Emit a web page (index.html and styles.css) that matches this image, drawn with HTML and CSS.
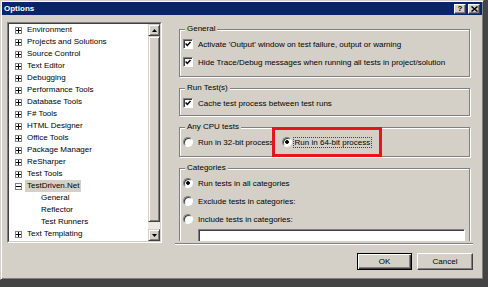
FILE: index.html
```html
<!DOCTYPE html>
<html lang="en">
<head>
    <meta charset="UTF-8">
    <title>Options</title>
    <link rel="stylesheet" href="styles.css">
</head>
<body>

<div class="window">
    <div class="titlebar">
        <span class="title">Options</span>
        <div class="caption-buttons">
            <span class="cap-btn">?</span>
            <span class="cap-btn">
                <svg width="7" height="6" viewBox="0 0 7 6"><path d="M0.5 0.5 L6.5 5.5 M6.5 0.5 L0.5 5.5" stroke="#000" stroke-width="1.5"/></svg>
            </span>
        </div>
    </div>

    <div class="client">
        <div class="main">
            <div class="tree">
                <div class="tree-inner">
                    <ul class="tree-list">
                        <li class="node"><span class="expander"></span><span class="label">Environment</span></li>
                        <li class="node"><span class="expander"></span><span class="label">Projects and Solutions</span></li>
                        <li class="node"><span class="expander"></span><span class="label">Source Control</span></li>
                        <li class="node"><span class="expander"></span><span class="label">Text Editor</span></li>
                        <li class="node"><span class="expander"></span><span class="label">Debugging</span></li>
                        <li class="node"><span class="expander"></span><span class="label">Performance Tools</span></li>
                        <li class="node"><span class="expander"></span><span class="label">Database Tools</span></li>
                        <li class="node"><span class="expander"></span><span class="label">F# Tools</span></li>
                        <li class="node"><span class="expander"></span><span class="label">HTML Designer</span></li>
                        <li class="node"><span class="expander"></span><span class="label">Office Tools</span></li>
                        <li class="node"><span class="expander"></span><span class="label">Package Manager</span></li>
                        <li class="node"><span class="expander"></span><span class="label">ReSharper</span></li>
                        <li class="node"><span class="expander"></span><span class="label">Test Tools</span></li>
                        <li class="node"><span class="expander open"></span><span class="label selected">TestDriven.Net</span></li>
                        <li class="node child"><span class="label">General</span></li>
                        <li class="node child"><span class="label">Reflector</span></li>
                        <li class="node child"><span class="label">Test Runners</span></li>
                        <li class="node"><span class="expander"></span><span class="label">Text Templating</span></li>
                    </ul>
                    <div class="scrollbar">
                        <span class="sb-btn">
                            <svg width="5" height="3" viewBox="0 0 5 3"><path d="M2.5 0 L5 3 L0 3 Z" fill="#000"/></svg>
                        </span>
                        <span class="sb-thumb"></span>
                        <span class="sb-track"></span>
                        <span class="sb-btn">
                            <svg width="5" height="3" viewBox="0 0 5 3"><path d="M0 0 L5 0 L2.5 3 Z" fill="#000"/></svg>
                        </span>
                    </div>
                </div>
            </div>

            <div class="page">
                <div class="page-scroll">
                    <div class="group">
                        <div class="group-title">General</div>
                        <div class="option"><span class="check"><svg width="6" height="6" viewBox="0 0 6 6"><path d="M0.6 2.6 L2.3 4.4 L5.5 0.9" fill="none" stroke="#000" stroke-width="1.5"/></svg></span>Activate 'Output' window on test failure, output or warning</div>
                        <div class="option"><span class="check"><svg width="6" height="6" viewBox="0 0 6 6"><path d="M0.6 2.6 L2.3 4.4 L5.5 0.9" fill="none" stroke="#000" stroke-width="1.5"/></svg></span>Hide Trace/Debug messages when running all tests in project/solution</div>
                    </div>

                    <div class="group tight">
                        <div class="group-title">Run Test(s)</div>
                        <div class="option"><span class="check"><svg width="6" height="6" viewBox="0 0 6 6"><path d="M0.6 2.6 L2.3 4.4 L5.5 0.9" fill="none" stroke="#000" stroke-width="1.5"/></svg></span>Cache test process between test runs</div>
                    </div>

                    <div class="group">
                        <div class="group-title">Any CPU tests</div>
                        <div class="option-row">
                            <div class="option"><span class="radio"></span>Run in 32-bit process</div>
                            <div class="option focused highlight"><span class="radio on"></span><span class="focus">Run in 64-bit process</span></div>
                        </div>
                    </div>

                    <div class="group">
                        <div class="group-title">Categories</div>
                        <div class="option"><span class="radio on"></span>Run tests in all categories</div>
                        <div class="option"><span class="radio"></span>Exclude tests in categories:</div>
                        <div class="option"><span class="radio"></span>Include tests in categories:</div>
                        <input type="text" class="text-input">
                    </div>
                </div>
                <div class="page-sep"></div>
            </div>
        </div>

        <div class="footer">
            <button class="btn default">OK</button>
            <button class="btn">Cancel</button>
        </div>
    </div>
</div>

</body>
</html>
```

FILE: styles.css
```css
* {
    box-sizing: border-box;
}
body {
    margin: 0;
    background: #444;
    font-family: 'Liberation Sans', Arial, sans-serif;
    font-size: 8px;
    color: #000;
}
.window {
    width: 484px;
    height: 280px;
    padding: 1px;
    background: #d4d0c8;
    border: 1px solid;
    border-color: #d4d0c8 #404040 #404040 #d4d0c8;
    box-shadow: inset 1px 1px #fff, inset -1px -1px #808080;
    display: flex;
    flex-direction: column;
}
.titlebar {
    height: 13px;
    background: #0a246a;
    display: flex;
    align-items: center;
    justify-content: space-between;
    padding: 0 2px;
}
.title {
    color: #fff;
    font-weight: bold;
}
.caption-buttons {
    display: flex;
    gap: 2px;
}
.cap-btn {
    width: 12px;
    height: 10px;
    background: #d4d0c8;
    border: 1px solid;
    border-color: #fff #404040 #404040 #fff;
    box-shadow: inset -1px -1px #808080;
    display: flex;
    align-items: center;
    justify-content: center;
    font-weight: bold;
    line-height: 1;
}
.client {
    flex: 1;
    display: flex;
    flex-direction: column;
}
.main {
    display: flex;
    gap: 13px;
    margin-top: 7px;
    padding-left: 5px;
}

/* tree */
.tree {
    width: 155px;
    height: 221px;
    border: 1px solid;
    border-color: #808080 #fff #fff #808080;
}
.tree-inner {
    height: 100%;
    display: flex;
    background: #fff;
    border: 1px solid;
    border-color: #404040 #d4d0c8 #d4d0c8 #404040;
}
.tree-list {
    flex: 1;
    margin: 0;
    padding: 0;
    list-style: none;
    overflow: hidden;
}
.node {
    height: 12px;
    line-height: 12px;
    display: flex;
    align-items: center;
    gap: 3px;
    padding-left: 6px;
    white-space: nowrap;
}
.node.child {
    padding-left: 30px;
}
.expander {
    width: 7px;
    height: 7px;
    border: 1px solid #808080;
    background:
        linear-gradient(#000, #000) center / 5px 1px no-repeat,
        linear-gradient(#000, #000) center / 1px 5px no-repeat,
        #fff;
}
.expander.open {
    background:
        linear-gradient(#000, #000) center / 5px 1px no-repeat,
        #fff;
}
.label {
    padding: 0 2px;
}
.label.selected {
    background: #d4d0c8;
}
.scrollbar {
    width: 12px;
    display: flex;
    flex-direction: column;
}
.sb-btn {
    height: 12px;
    background: #d4d0c8;
    border: 1px solid;
    border-color: #d4d0c8 #404040 #404040 #d4d0c8;
    box-shadow: inset 1px 1px #fff, inset -1px -1px #808080;
    display: flex;
    align-items: center;
    justify-content: center;
}
.sb-thumb {
    height: 186px;
    background: #d4d0c8;
    border: 1px solid;
    border-color: #d4d0c8 #404040 #404040 #d4d0c8;
    box-shadow: inset 1px 1px #fff, inset -1px -1px #808080;
}
.sb-track {
    flex: 1;
    background: #ebe9e4;
}

/* option page */
.page {
    width: 298px;
    padding-top: 2px;
    display: flex;
    flex-direction: column;
}
.page-scroll {
    height: 217px;
    overflow: hidden;
    padding: 0 3px 0 4px;
}
.page-sep {
    margin-top: 2px;
    border-top: 1px solid #808080;
    border-bottom: 1px solid #fff;
}
.group {
    margin-top: 11px;
    padding: 0 0 5px 3px;
    border: 1px solid #808080;
    box-shadow: inset 1px 1px #fff, 1px 1px #fff;
}
.group:first-child {
    margin-top: 5px;
}
.group.tight {
    padding-bottom: 3px;
}
.group-title {
    width: fit-content;
    height: 10px;
    line-height: 10px;
    margin: -6px 0 1px 2px;
    padding: 0 2px;
    background: #d4d0c8;
}
.option {
    height: 18px;
    display: flex;
    align-items: center;
    gap: 5px;
    white-space: nowrap;
}
.option-row {
    display: flex;
}
.option.focused {
    margin-left: 8px;
    gap: 1px;
}
.check {
    width: 10px;
    height: 10px;
    background: #fff;
    border: 1px solid;
    border-color: #808080 #fff #fff #808080;
    box-shadow: inset 1px 1px #404040;
    display: flex;
    align-items: center;
    justify-content: center;
}
.radio {
    width: 10px;
    height: 10px;
    border-radius: 50%;
    background: #fff;
    border: 1px solid;
    border-color: #808080 #fff #fff #808080;
    box-shadow: inset 1px 1px #404040;
}
.radio.on {
    background: radial-gradient(circle, #000 1.5px, #fff 2.2px);
}
.focus {
    border: 1px dotted #404040;
    padding: 0 1px;
    line-height: 9px;
}
.highlight {
    position: relative;
}
.highlight::after {
    content: "";
    position: absolute;
    top: -6px;
    bottom: -6px;
    left: -10px;
    right: -10px;
    border: 3px solid #e8141c;
}
.text-input {
    display: block;
    width: 267px;
    height: 14px;
    margin: 1px 0 0 15px;
    background: #fff;
    border: 1px solid;
    border-color: #808080 #fff #fff #808080;
    box-shadow: inset 1px 1px #404040;
    font: inherit;
}

/* buttons */
.footer {
    display: flex;
    justify-content: flex-end;
    gap: 5px;
    padding: 8px 9px 0 0;
}
.btn {
    width: 56px;
    height: 17px;
    padding: 0;
    font: inherit;
    color: #000;
    background: #d4d0c8;
    border: 1px solid;
    border-color: #fff #404040 #404040 #fff;
    box-shadow: inset -1px -1px #808080;
}
.btn.default {
    width: 55px;
    border-color: #000;
    box-shadow: inset 1px 1px #fff, inset -1px -1px #404040, inset -2px -2px #808080;
}
```
